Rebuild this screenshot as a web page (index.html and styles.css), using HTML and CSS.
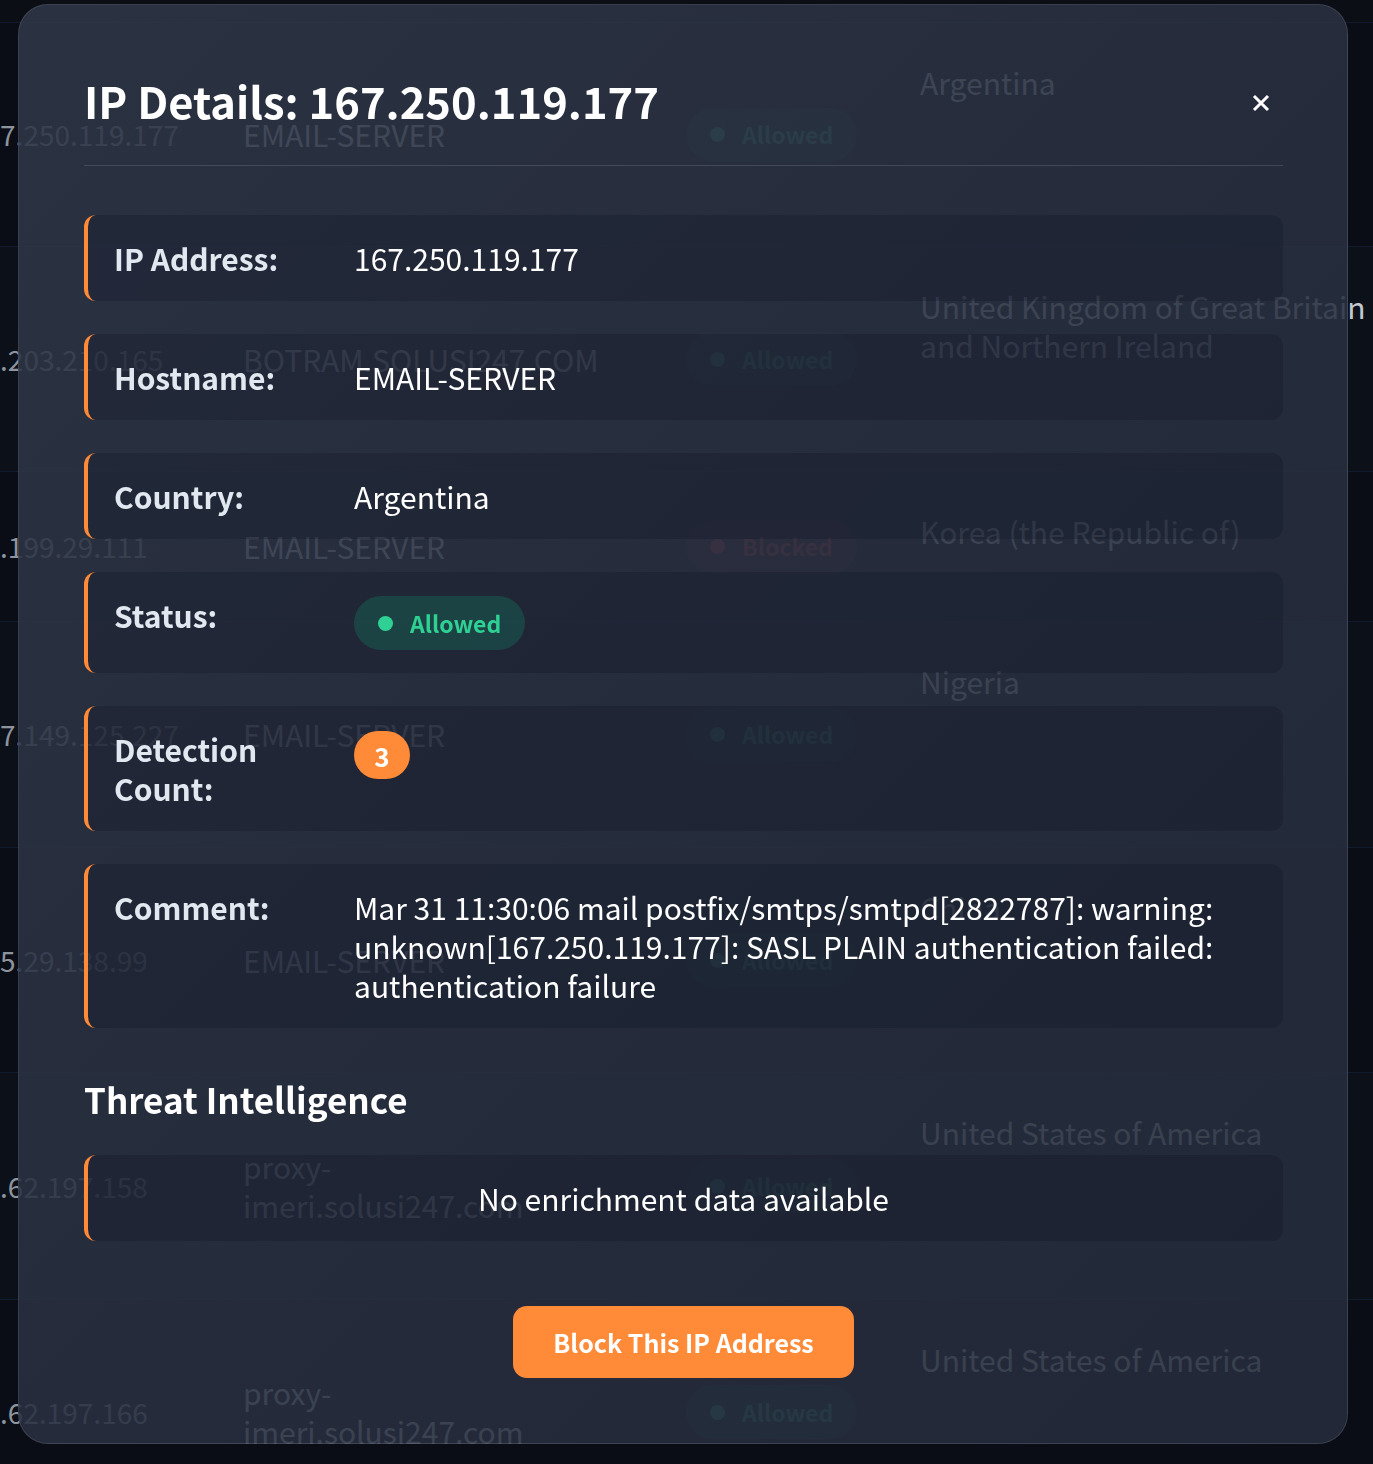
FILE: index.html
```html
<!DOCTYPE html>
<html lang="en">
<head>
<meta charset="utf-8">
<title>IP Details</title>
<link rel="stylesheet" href="styles.css">
</head>
<body>
<div class="page">
  <div class="table">
    <div class="thead"></div>
    <div class="row h224">
      <div class="c-ip">167.250.119.177</div>
      <div class="c-host">EMAIL-SERVER</div>
      <div class="c-status"><span class="pill allowed"><i class="dot"></i>Allowed</span></div>
      <div class="c-country">Argentina</div>
    </div>
    <div class="row h225">
      <div class="c-ip">10.203.210.165</div>
      <div class="c-host">BOTRAM.SOLUSI247.COM</div>
      <div class="c-status"><span class="pill allowed"><i class="dot"></i>Allowed</span></div>
      <div class="c-country">United Kingdom of Great Britain and Northern Ireland</div>
    </div>
    <div class="row h150">
      <div class="c-ip">14.199.29.111</div>
      <div class="c-host">EMAIL-SERVER</div>
      <div class="c-status"><span class="pill blocked"><i class="dot"></i>Blocked</span></div>
      <div class="c-country">Korea (the Republic of)</div>
    </div>
    <div class="row h226">
      <div class="c-ip">167.149.125.227</div>
      <div class="c-host">EMAIL-SERVER</div>
      <div class="c-status"><span class="pill allowed"><i class="dot"></i>Allowed</span></div>
      <div class="c-country">Nigeria</div>
    </div>
    <div class="row h225">
      <div class="c-ip">145.29.138.99</div>
      <div class="c-host">EMAIL-SERVER</div>
      <div class="c-status"><span class="pill allowed"><i class="dot"></i>Allowed</span></div>
      <div class="c-country">China</div>
    </div>
    <div class="row h227">
      <div class="c-ip">10.62.197.158</div>
      <div class="c-host">proxy-<br>imeri.solusi247.com</div>
      <div class="c-status"><span class="pill allowed"><i class="dot"></i>Allowed</span></div>
      <div class="c-country">United States of America</div>
    </div>
    <div class="row h225">
      <div class="c-ip">10.62.197.166</div>
      <div class="c-host">proxy-<br>imeri.solusi247.com</div>
      <div class="c-status"><span class="pill allowed"><i class="dot"></i>Allowed</span></div>
      <div class="c-country">United States of America</div>
    </div>
  </div>
</div>

<div class="overlay">
  <div class="modal">
    <div class="modal-head">
      <h2 class="modal-title">IP Details: 167.250.119.177</h2>
      <button class="close" aria-label="Close">
        <svg width="18" height="18" viewBox="0 0 18 18"><path d="M2 2L16 16M16 2L2 16" stroke="#ffffff" stroke-width="3"/></svg>
      </button>
    </div>

    <div class="cards">
      <div class="card">
        <div class="label">IP Address:</div>
        <div class="value">167.250.119.177</div>
      </div>
      <div class="card">
        <div class="label">Hostname:</div>
        <div class="value">EMAIL-SERVER</div>
      </div>
      <div class="card">
        <div class="label">Country:</div>
        <div class="value">Argentina</div>
      </div>
      <div class="card">
        <div class="label">Status:</div>
        <div class="value"><span class="pill allowed"><i class="dot"></i>Allowed</span></div>
      </div>
      <div class="card">
        <div class="label">Detection Count:</div>
        <div class="value"><span class="count">3</span></div>
      </div>
      <div class="card">
        <div class="label">Comment:</div>
        <div class="value">Mar 31 11:30:06 mail postfix/smtps/smtpd[2822787]: warning: unknown[167.250.119.177]: SASL PLAIN authentication failed: authentication failure</div>
      </div>
    </div>

    <h3 class="section-title">Threat Intelligence</h3>
    <div class="card empty">No enrichment data available</div>

    <div class="actions">
      <button class="block-btn">Block This IP Address</button>
    </div>
  </div>
</div>
</body>
</html>
```

FILE: styles.css
```css
* { box-sizing: border-box; }

html, body {
  margin: 0;
  padding: 0;
  width: 1373px;
  height: 1464px;
  overflow: hidden;
  background: #0a0e16;
  font-family: "Noto Sans CJK SC", "Noto Sans", sans-serif;
  font-size: 30px;
  line-height: 39px;
  color: #ffffff;
}

/* ---------- background table ---------- */
.page {
  position: relative;
  height: 1464px;
  overflow: hidden;
}

.table {
  margin-left: -31px;
  width: 1500px;
}

.thead {
  height: 23px;
  background: #0b0e15;
  border-bottom: 1px solid #111b2e;
}

.row {
  display: grid;
  grid-template-columns: 274px 443px 234px 460px;
  border-bottom: 1px solid #111b2e;
  background: #0a0d15;
}
.row:nth-child(odd) { background: #0c1019; }
.h150 { height: 150px; }
.h224 { height: 224px; }
.h225 { height: 225px; }
.h226 { height: 226px; }
.h227 { height: 227px; }

.c-ip {
  align-self: center;
  font-size: 28px;
  color: #8d949e;
  white-space: nowrap;
}
.c-host {
  align-self: center;
  color: #c3c8cf;
}
.c-status { align-self: center; }
.c-status .pill { opacity: 0.6; }
.c-country {
  align-self: start;
  padding-top: 40px;
  color: #c3c8cf;
}

/* ---------- pills ---------- */
.pill {
  display: inline-flex;
  align-items: center;
  height: 54px;
  padding: 0 24px;
  border-radius: 27px;
  font-weight: 700;
  font-size: 23px;
  gap: 17px;
}
.pill .dot {
  width: 15px;
  height: 15px;
  border-radius: 50%;
  display: block;
}
.pill.allowed { background: rgba(16, 185, 129, 0.2); color: #2fd093; }
.pill.allowed .dot { background: #2fd093; }
.pill.blocked { background: rgba(239, 68, 68, 0.2); color: #ef4444; }
.pill.blocked .dot { background: #ef4444; }

/* ---------- modal ---------- */
.overlay {
  position: fixed;
  inset: 0;
  padding: 4px 25px 20px 18px;
}

.modal {
  height: 1440px;
  border: 1px solid rgba(255, 255, 255, 0.1);
  border-radius: 30px;
  background: linear-gradient(135deg, rgba(47, 55, 72, 0.88) 0%, rgba(40, 47, 64, 0.88) 60%, rgba(37, 44, 60, 0.88) 100%);
  padding: 69px 64px 64px 65px;
  display: flex;
  flex-direction: column;
}

.modal-head {
  display: flex;
  align-items: center;
  justify-content: space-between;
  padding-bottom: 38px;
  border-bottom: 1px solid rgba(255, 255, 255, 0.13);
}

.modal-title {
  margin: 0;
  font-size: 43.5px;
  line-height: 53px;
  font-weight: 700;
  color: #ffffff;
}

.close {
  background: none;
  border: 0;
  padding: 0;
  margin: 5px 13px 0 0;
  width: 18px;
  height: 18px;
  display: flex;
  cursor: pointer;
}

.cards {
  display: flex;
  flex-direction: column;
  gap: 33px;
  margin-top: 49px;
}

.card {
  display: grid;
  grid-template-columns: 200px 1fr;
  column-gap: 40px;
  align-items: start;
  padding: 24px 30px 23px 26px;
  border-left: 4px solid #ff8a38;
  border-radius: 12px;
  background: rgba(16, 21, 34, 0.26);
}

.label {
  font-weight: 700;
  color: #e2e8f0;
}

.value {
  color: #ffffff;
}

.count {
  display: inline-flex;
  align-items: center;
  justify-content: center;
  width: 56px;
  height: 48px;
  margin-top: 1px;
  border-radius: 24px;
  background: #ff8a38;
  color: #ffffff;
  font-weight: 700;
  font-size: 26px;
}

.section-title {
  margin: 51px 0 36px;
  font-size: 35px;
  line-height: 40px;
  font-weight: 700;
  color: #ffffff;
}

.card.empty {
  display: block;
  text-align: center;
}

.actions {
  display: flex;
  justify-content: center;
  margin-top: 65px;
}

.block-btn {
  font-family: inherit;
  font-size: 25px;
  line-height: 40px;
  font-weight: 700;
  color: #ffffff;
  background: #ff8a38;
  border: 0;
  border-radius: 14px;
  padding: 16px 40px;
  cursor: pointer;
}
```
